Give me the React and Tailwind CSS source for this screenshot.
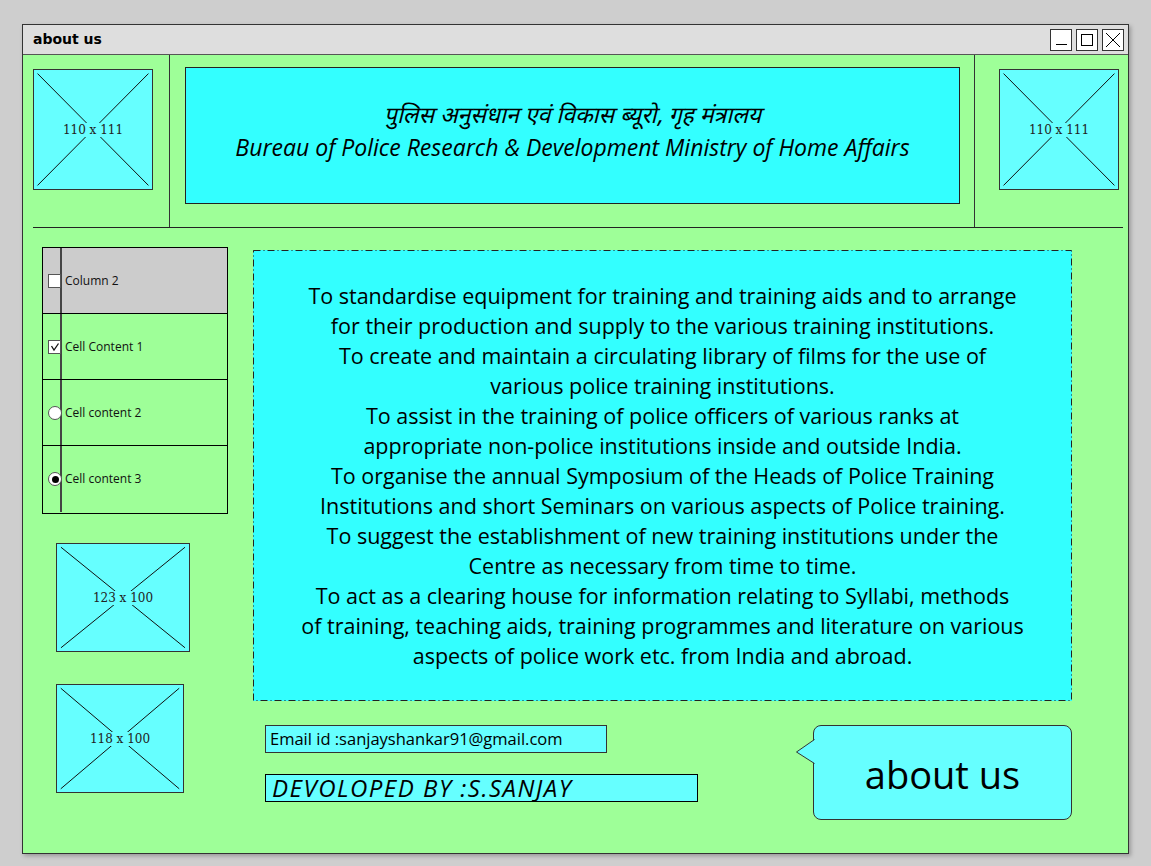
import React from "react";

const F = "font-['Comic_Sans_MS','Open_Sans',sans-serif]";

function Ph({ className, label }) {
  return (
    <div className={`relative border border-[#333] bg-[#66ffff] ${className}`}>
      <svg className="absolute inset-0 h-full w-full" viewBox="0 0 100 100" preserveAspectRatio="none">
        <line x1="3" y1="3" x2="97" y2="97" stroke="#111" strokeWidth="1" vectorEffect="non-scaling-stroke" />
        <line x1="97" y1="3" x2="3" y2="97" stroke="#111" strokeWidth="1" vectorEffect="non-scaling-stroke" />
      </svg>
      <div className="absolute inset-0 flex items-center justify-center">
        <span className="bg-[#66ffff] px-[2px] font-['DejaVu_Serif',serif] text-[12px] leading-[14px] text-[#222]">{label}</span>
      </div>
    </div>
  );
}

const lines = [
  "To standardise equipment for training and training aids and to arrange",
  "for their production and supply to the various training institutions.",
  "To create and maintain a circulating library of films for the use of",
  "various police training institutions.",
  "To assist in the training of police officers of various ranks at",
  "appropriate non-police institutions inside and outside India.",
  "To organise the annual Symposium of the Heads of Police Training",
  "Institutions and short Seminars on various aspects of Police training.",
  "To suggest the establishment of new training institutions under the",
  "Centre as necessary from time to time.",
  "To act as a clearing house for information relating to Syllabi, methods",
  "of training, teaching aids, training programmes and literature on various",
  "aspects of police work etc. from India and abroad.",
];

function Row({ icon, text, header }) {
  return (
    <div className={`flex h-[66px] items-center border-b border-black last:border-b-0 ${header ? "bg-[#cccccc]" : ""}`}>
      <div className="relative flex h-full w-[19px] items-center border-r-2 border-[#444]">
        <div className="ml-[5px]">{icon}</div>
      </div>
      <span className={`ml-[3px] ${F} text-[12px] text-[#111]`}>{text}</span>
    </div>
  );
}

export default function App() {
  return (
    <div className={`h-[866px] w-[1151px] bg-[#cecece] pl-[22px] pt-[24px] ${F}`}>
      <div className="flex h-[830px] w-[1107px] flex-col border border-[#333] shadow-[2px_2px_4px_rgba(0,0,0,0.25)]">
        {/* title bar */}
        <div className="flex h-[30px] items-center justify-between border-b border-[#555] bg-[#dedede] pl-[10px] pr-[4px]">
          <span className="font-['DejaVu_Sans',sans-serif] text-[14px] font-bold text-black">about us</span>
          <div className="flex gap-[4px]">
            <div className="flex h-[22px] w-[22px] items-end justify-center border border-[#333] bg-white pb-[5px]">
              <div className="h-px w-[11px] bg-black" />
            </div>
            <div className="flex h-[22px] w-[22px] items-center justify-center border border-[#333] bg-white">
              <div className="h-[12px] w-[12px] border border-black" />
            </div>
            <div className="flex h-[22px] w-[22px] items-center justify-center border border-[#333] bg-white">
              <svg width="16" height="16" viewBox="0 0 16 16">
                <line x1="1" y1="1" x2="15" y2="15" stroke="#000" strokeWidth="1" />
                <line x1="15" y1="1" x2="1" y2="15" stroke="#000" strokeWidth="1" />
              </svg>
            </div>
          </div>
        </div>

        {/* content */}
        <div className="flex flex-1 flex-col bg-[#9eff98]">
          {/* header */}
          <div className="flex h-[172px]">
            <div className="w-[146px] pl-[10px] pt-[14px]">
              <Ph className="h-[121px] w-[120px]" label="110 x 111" />
            </div>
            <div className="w-[1px] bg-[#333]" />
            <div className="w-[804px] pl-[15px] pt-[12px]">
              <div className="flex h-[137px] w-[775px] flex-col items-center justify-center border border-[#222] bg-[#33ffff] pb-[8px] text-black">
                <div className="font-['Noto_Sans_Devanagari','Noto_Sans',sans-serif] text-[23px] italic leading-[30px]">
                  पुलिस अनुसंधान एवं विकास ब्यूरो, गृह मंत्रालय
                </div>
                <div className="whitespace-nowrap text-[23px] italic leading-[30px]">
                  Bureau of Police Research &amp; Development Ministry of Home Affairs
                </div>
              </div>
            </div>
            <div className="w-[1px] bg-[#333]" />
            <div className="pl-[24px] pt-[14px]">
              <Ph className="h-[121px] w-[120px]" label="110 x 111" />
            </div>
          </div>
          <div className="ml-[10px] mr-[5px] h-px bg-[#222]" />

          {/* lower */}
          <div className="flex flex-1">
            <div className="w-[230px] pl-[19px] pt-[19px]">
              <div className="flex h-[267px] w-[186px] flex-col border border-black">
                <Row
                  header
                  text="Column 2"
                  icon={<div className="h-[14px] w-[13px] border border-[#555] bg-white" />}
                />
                <Row
                  text="Cell Content 1"
                  icon={
                    <div className="flex h-[14px] w-[13px] items-center justify-center border border-[#555] bg-white text-[11px] leading-none">
                      <svg width="10" height="10" viewBox="0 0 10 10">
                        <path d="M1.5 4 L4 8 L8.5 1.5" fill="none" stroke="#111" strokeWidth="1.3" />
                      </svg>
                    </div>
                  }
                />
                <Row
                  text="Cell content 2"
                  icon={<div className="h-[14px] w-[14px] rounded-full border border-[#555] bg-white" />}
                />
                <Row
                  text="Cell content 3"
                  icon={
                    <div className="flex h-[14px] w-[14px] items-center justify-center rounded-full border border-[#555] bg-white">
                      <div className="h-[7px] w-[7px] rounded-full bg-black" />
                    </div>
                  }
                />
              </div>
              <div className="pl-[14px] pt-[29px]">
                <Ph className="h-[109px] w-[134px]" label="123 x 100" />
              </div>
              <div className="pl-[14px] pt-[32px]">
                <Ph className="h-[109px] w-[128px]" label="118 x 100" />
              </div>
            </div>

            <div className="flex w-[819px] flex-col pt-[22px]">
              <div className="relative h-[451px] w-[819px] bg-[#33ffff] pt-[31px] text-center text-[21.5px] leading-[30px] text-black">
                <svg className="absolute inset-0 h-full w-full" preserveAspectRatio="none">
                  <rect x="0.5" y="0.5" width="818" height="450" fill="none" stroke="#222" strokeWidth="1" strokeDasharray="7 3 1 3" />
                </svg>
                {lines.map((l, i) => (
                  <div key={i} className="relative whitespace-nowrap">{l}</div>
                ))}
              </div>

              <div className="flex justify-between pt-[24px]">
                <div className="flex flex-col pl-[12px]">
                  <div className="flex h-[28px] w-[342px] items-center border border-[#333] bg-[#66ffff] pl-[4px] text-[16.5px] text-black">
                    Email id :sanjayshankar91@gmail.com
                  </div>
                  <div className="mt-[21px] flex h-[28px] w-[433px] items-center border border-black bg-[#66ffff] pl-[6px] text-[24px] italic tracking-[1.5px] text-black">
                    DEVOLOPED BY :S.SANJAY
                  </div>
                </div>
                <div className="relative flex h-[95px] w-[259px] items-center justify-center rounded-[8px] border border-[#333] bg-[#66ffff] pt-[4px] text-[38px] text-black">
                  <svg className="absolute left-[-18px] top-[13px]" width="20" height="26" viewBox="0 0 20 26">
                    <path d="M18.5 0.5 L0.5 13 L18.5 24.5" fill="#66ffff" stroke="#333" strokeWidth="1" />
                    <rect x="18.5" y="1.5" width="2" height="22" fill="#66ffff" />
                  </svg>
                  about us
                </div>
              </div>
            </div>
          </div>
        </div>
      </div>
    </div>
  );
}
